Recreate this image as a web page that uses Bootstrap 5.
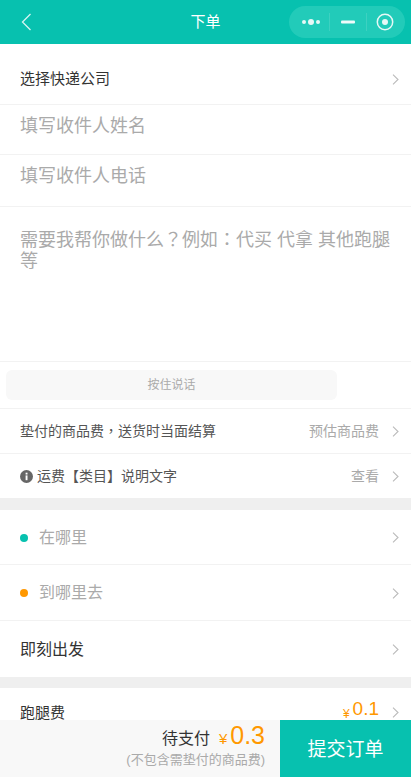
<!DOCTYPE html>
<html lang="zh">
<head>
<meta charset="utf-8">
<title>下单</title>
<meta name="viewport" content="width=device-width, initial-scale=1">
<link href="https://cdn.jsdelivr.net/npm/bootstrap@5.3.0/dist/css/bootstrap.min.css" rel="stylesheet">
<style>
html,body{height:777px;overflow:hidden;}
body{font-family:"Liberation Sans","Noto Sans CJK SC",sans-serif;color:#333;background:#fff;}
.shell{height:777px;}
.topbar{height:44px;background:#07c1af;color:#fff;padding:0 6px;flex:none;}
.topside{width:116px;padding-left:15px;}
.toptitle{font-size:15px;}
.capsule{width:116px;height:32px;border-radius:16px;background:#22cbb9;padding-left:4px;}
.capcell{height:100%;width:36px;}
.capcell-sep{border-left:1px solid #3dd1c1;height:18px;}
.scrollpane{flex:1 1 auto;min-height:0;overflow:hidden;}
.frow{padding:0 12px 0 20px;border-bottom:1px solid #f2f2f2;}
.r60{height:61px;font-size:15px;color:#333;padding-top:10px;}
.r50{height:50px;font-size:18px;color:#aaa;padding-bottom:7px;}
.r52{height:52px;font-size:18px;color:#aaa;padding-bottom:8px;}
.notes{height:155px;padding:23px 20px 0;font-family:"Liberation Sans","Noto Sans CJK TC",sans-serif;font-size:18px;line-height:21px;color:#aaa;border-bottom:1px solid #f2f2f2;}
.punct{font-family:"Liberation Sans","Noto Sans CJK TC",sans-serif;}
.voicerow{height:47px;padding:8px 0 0 6px;border-bottom:1px solid #f2f2f2;}
.voicebtn{width:331px;height:30px;background:#f8f8f8;border-radius:6px;font-size:12px;color:#aaa;}
.r45{height:45px;font-size:14px;color:#555;}
.r44{height:44px;font-size:14px;color:#555;border-bottom:0;}
.sub{color:#aaa;}
.chev{width:7px;height:11px;margin-left:13px;flex:none;}
.gapbar{height:12px;background:#efefef;}
.gapbar2{height:11px;background:#efefef;}
.r55{height:55px;font-size:16px;color:#aaa;padding-top:1px;}
.r56{height:56px;font-size:16px;color:#aaa;padding-top:1px;}
.dark{color:#333;}
.dot{width:8px;height:8px;border-radius:50%;margin-right:11px;flex:none;}
.dot-g{background:#07c1af;}
.dot-o{background:#ff9800;}
.r-run{height:33px;font-size:15px;line-height:1;color:#333;border-bottom:0;padding-top:15px;}
.orange{color:#ff9800;}
.yen-s{font-size:12px;margin-right:3px;padding-top:3px;}
.amt-s{font-size:19px;line-height:.8;margin-bottom:6px;}
.paybar{height:57px;flex:none;background:#f8f8f8;}
.paysum{flex:1 1 auto;padding:0 15px 7px 0;text-align:right;}
.payl1{font-size:16px;line-height:26px;color:#333;}
.payl2{font-size:13px;line-height:16px;color:#aaa;}
.yen-b{font-size:15px;margin:0 3px 0 9px;}
.amt-b{font-size:25px;line-height:1;}
.paybtn{width:131px;background:#07c1af;color:#fff;font-size:19px;border-radius:0;border:0;padding:3px 0 0;}
.paybtn:hover{background:#07c1af;color:#fff;}
</style>
</head>
<body>
<div class="shell d-flex flex-column">
  <div class="topbar d-flex align-items-center justify-content-between">
    <div class="topside">
      <svg width="11" height="18" viewBox="0 0 11 18" class="d-block"><path d="M9.5 1 1.5 9l8 8" fill="none" stroke="#d5f5f1" stroke-width="1.3"/></svg>
    </div>
    <div class="toptitle">下单</div>
    <div class="capsule d-flex align-items-center">
      <div class="d-flex align-items-center justify-content-center capcell">
        <svg width="20" height="8" viewBox="0 0 20 8"><circle cx="3" cy="4" r="2" fill="#e6f8f6"/><circle cx="10" cy="4" r="3" fill="#e6f8f6"/><circle cx="17" cy="4" r="2" fill="#e6f8f6"/></svg>
      </div>
      <div class="capcell-sep"></div>
      <div class="d-flex align-items-center justify-content-center capcell">
        <svg width="14" height="4" viewBox="0 0 14 4"><rect width="14" height="3" y="0.5" rx="1" fill="#f0fbfa"/></svg>
      </div>
      <div class="capcell-sep"></div>
      <div class="d-flex align-items-center justify-content-center capcell">
        <svg width="18" height="18" viewBox="0 0 18 18"><circle cx="9" cy="9" r="7.7" fill="none" stroke="#e6f8f6" stroke-width="1.5"/><circle cx="9" cy="9" r="3" fill="#e6f8f6"/></svg>
      </div>
    </div>
  </div>

  <div class="scrollpane">
    <div class="frow r60 d-flex align-items-center justify-content-between">
      <span>选择快递公司</span>
      <svg class="chev" viewBox="0 0 7 11"><path d="m1 .7 5 4.8-5 4.8" fill="none" stroke="#bbb" stroke-width="1.1"/></svg>
    </div>
    <div class="frow r50 d-flex align-items-center">填写收件人姓名</div>
    <div class="frow r52 d-flex align-items-center">填写收件人电话</div>
    <div class="notes" lang="zh-TW">需要我帮你做什么？例如：代买 代拿 其他跑腿等</div>
    <div class="voicerow">
      <div class="voicebtn d-flex align-items-center justify-content-center">按住说话</div>
    </div>
    <div class="frow r45 d-flex align-items-center justify-content-between">
      <span>垫付的商品费<span class="punct" lang="zh-TW">，</span>送货时当面结算</span>
      <span class="d-flex align-items-center"><span class="sub">预估商品费</span><svg class="chev" viewBox="0 0 7 11"><path d="m1 .7 5 4.8-5 4.8" fill="none" stroke="#bbb" stroke-width="1.1"/></svg></span>
    </div>
    <div class="frow r44 d-flex align-items-center justify-content-between">
      <span class="d-flex align-items-center gap-1">
        <svg width="13" height="13" viewBox="0 0 13 13"><circle cx="6.5" cy="6.5" r="6.5" fill="#666"/><rect x="5.6" y="5.4" width="1.9" height="4.8" fill="#fff"/><rect x="5.6" y="2.7" width="1.9" height="1.8" fill="#fff"/></svg>
        <span>运费【类目】说明文字</span>
      </span>
      <span class="d-flex align-items-center"><span class="sub">查看</span><svg class="chev" viewBox="0 0 7 11"><path d="m1 .7 5 4.8-5 4.8" fill="none" stroke="#bbb" stroke-width="1.1"/></svg></span>
    </div>
    <div class="gapbar"></div>
    <div class="frow r55 d-flex align-items-center justify-content-between">
      <span class="d-flex align-items-center"><span class="dot dot-g"></span>在哪里</span>
      <svg class="chev" viewBox="0 0 7 11"><path d="m1 .7 5 4.8-5 4.8" fill="none" stroke="#bbb" stroke-width="1.1"/></svg>
    </div>
    <div class="frow r56 d-flex align-items-center justify-content-between">
      <span class="d-flex align-items-center"><span class="dot dot-o"></span>到哪里去</span>
      <svg class="chev" viewBox="0 0 7 11"><path d="m1 .7 5 4.8-5 4.8" fill="none" stroke="#bbb" stroke-width="1.1"/></svg>
    </div>
    <div class="frow r56 d-flex align-items-center justify-content-between dark border-0">
      <span>即刻出发</span>
      <svg class="chev" viewBox="0 0 7 11"><path d="m1 .7 5 4.8-5 4.8" fill="none" stroke="#bbb" stroke-width="1.1"/></svg>
    </div>
    <div class="gapbar2"></div>
    <div class="frow r-run d-flex align-items-center justify-content-between">
      <span>跑腿费</span>
      <span class="d-flex align-items-center orange"><span class="yen-s">¥</span><span class="amt-s">0.1</span><svg class="chev" viewBox="0 0 7 11"><path d="m1 .7 5 4.8-5 4.8" fill="none" stroke="#bbb" stroke-width="1.1"/></svg></span>
    </div>
  </div>

  <div class="paybar d-flex">
    <div class="paysum d-flex flex-column justify-content-center">
      <div class="payl1">待支付<span class="orange yen-b">¥</span><span class="orange amt-b">0.3</span></div>
      <div class="payl2">(不包含需垫付的商品费)</div>
    </div>
    <button type="button" class="btn paybtn">提交订单</button>
  </div>
</div>
<script src="https://cdn.jsdelivr.net/npm/bootstrap@5.3.0/dist/js/bootstrap.bundle.min.js"></script>
</body>
</html>
